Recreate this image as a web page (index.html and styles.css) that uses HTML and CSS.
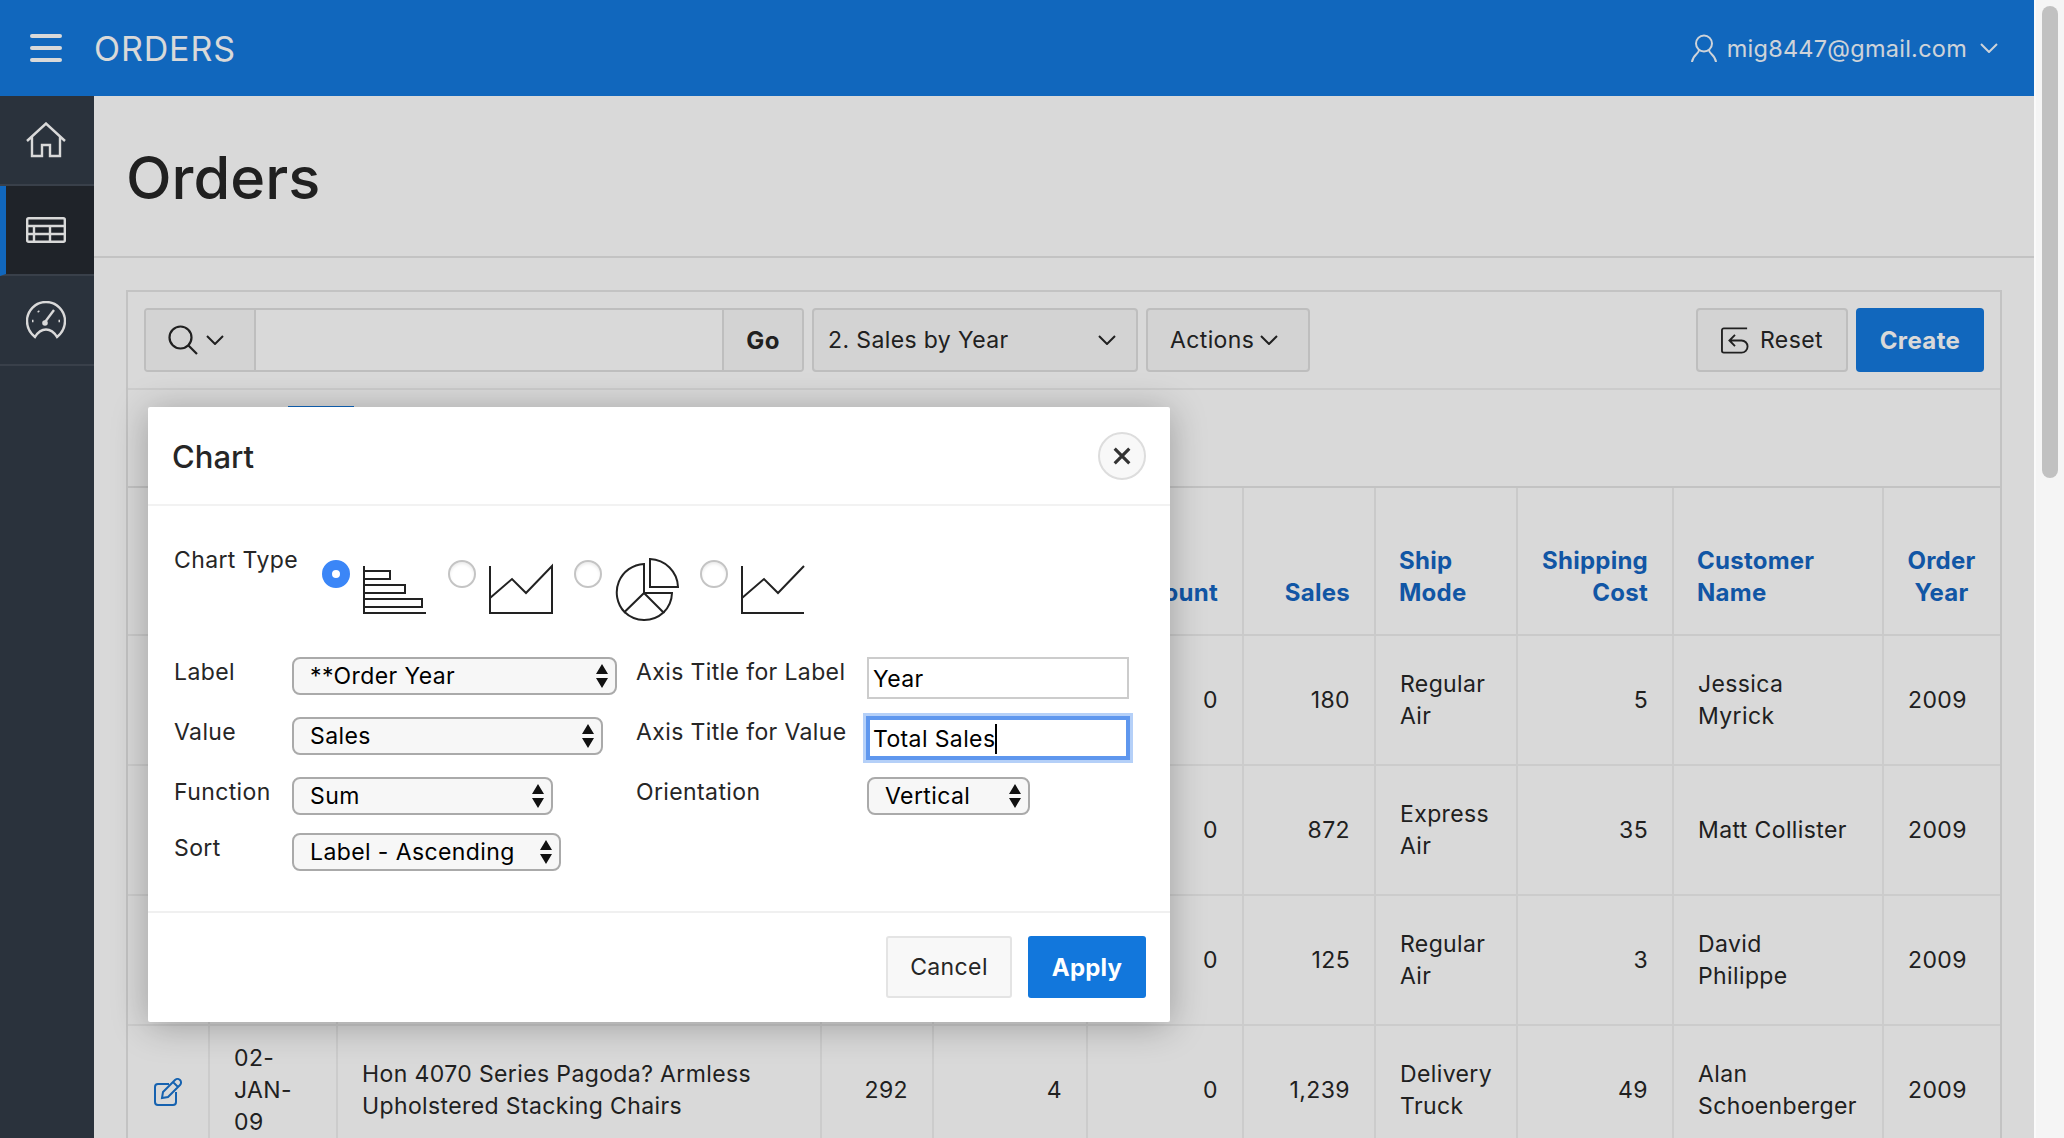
FILE: index.html
```html
<!DOCTYPE html>
<html lang="en">
<head>
    <meta charset="UTF-8">
    <title>Orders</title>
    <link rel="stylesheet" href="styles.css">
</head>
<body>
    <div class="page">
        <header class="topBar">
            <div class="menuIcon"><span></span><span></span><span></span></div>
            <div class="appName">ORDERS</div>
            <div class="userMenu">
                <svg class="userIcon" viewBox="0 0 26 29" fill="none" stroke="currentColor" stroke-width="2">
                    <circle cx="13" cy="9.5" r="8"/>
                    <path d="M8 16 C8 20 2 20 1 28 M18 16 C18 20 24 20 25 28"/>
                </svg>
                <span>mig8447@gmail.com</span>
                <svg class="chevron" viewBox="0 0 18 10" fill="none" stroke="currentColor" stroke-width="2"><path d="M1 1 L9 9 L17 1"/></svg>
            </div>
        </header>

        <div class="main">
            <nav class="sideNav">
                <a class="navItem">
                    <svg viewBox="0 0 40 36" fill="none" stroke="currentColor" stroke-width="2.4">
                        <path d="M1 19 L20 1.5 L39 19 M6 15 V34 H16 V23 H24 V34 H34 V15"/>
                    </svg>
                </a>
                <a class="navItem navItemActive">
                    <svg viewBox="0 0 40 26" fill="none" stroke="currentColor" stroke-width="2.4">
                        <rect x="1.2" y="1.2" width="37.6" height="23.6" rx="1.5"/>
                        <path d="M1 9 H39 M1 17 H39 M8 9 V25 M24 9 V25"/>
                    </svg>
                </a>
                <a class="navItem">
                    <svg viewBox="0 0 40 38" fill="none" stroke="currentColor" stroke-width="2.4">
                        <path d="M9 36 C4 32 1 26 1 20 A19 19 0 0 1 39 20 C39 26 36 32 31 36 C28 31 24 28.5 20 28.5 C16 28.5 12 31 9 36 Z"/>
                        <path d="M19 21 L28 9"/>
                        <circle cx="19" cy="22" r="1.6" fill="currentColor"/>
                        <path d="M6 20 H7.5 M32.5 20 H34 M12 10 L13 11"/>
                    </svg>
                </a>
            </nav>

            <div class="content">
                <div class="titleBand">
                    <h1 class="pageTitle">Orders</h1>
                </div>

                <section class="report">
                    <div class="toolbar">
                        <div class="searchGroup">
                            <div class="searchIconBox">
                                <svg class="searchIcon" viewBox="0 0 30 30" fill="none" stroke="currentColor" stroke-width="2.2">
                                    <circle cx="12.5" cy="12.5" r="11"/>
                                    <path d="M20.5 20.5 L29 29"/>
                                </svg>
                                <svg class="chevron" viewBox="0 0 18 10" fill="none" stroke="currentColor" stroke-width="2"><path d="M1 1 L9 9 L17 1"/></svg>
                            </div>
                            <div class="searchInput"></div>
                            <div class="goBtn">Go</div>
                        </div>
                        <div class="toolBtn reportSelect">
                            <span>2. Sales by Year</span>
                            <svg class="chevron" viewBox="0 0 18 10" fill="none" stroke="currentColor" stroke-width="2"><path d="M1 1 L9 9 L17 1"/></svg>
                        </div>
                        <div class="toolBtn actionsBtn">
                            <span>Actions</span>
                            <svg class="chevron" viewBox="0 0 18 10" fill="none" stroke="currentColor" stroke-width="2"><path d="M1 1 L9 9 L17 1"/></svg>
                        </div>
                        <div class="toolSpacer"></div>
                        <div class="toolBtn resetBtn">
                            <svg class="resetIcon" viewBox="0 0 30 29" fill="none" stroke="currentColor" stroke-width="2">
                                <path d="M28 1.5 H3 A2 2 0 0 0 1 3.5 V25.5 A2 2 0 0 0 3 27.5 H22 A6.5 6.5 0 0 0 22 14.5 H9 M15 8.5 L9 14.5 L15 20.5"/>
                            </svg>
                            <span>Reset</span>
                        </div>
                        <div class="createBtn">Create</div>
                    </div>

                    <div class="tabsRow"><div class="activeTab"></div></div>

                    <table class="ordersTable">
                        <colgroup>
                            <col class="colEdit"><col class="colDate"><col class="colName"><col class="colProfit">
                            <col class="colQty"><col class="colDiscount"><col class="colSales"><col class="colShip">
                            <col class="colCost"><col class="colCustomer"><col class="colYear">
                        </colgroup>
                        <thead>
                            <tr>
                                <th></th><th></th><th></th><th></th><th></th>
                                <th class="right">Discount</th>
                                <th class="right">Sales</th>
                                <th>Ship Mode</th>
                                <th class="right">Shipping Cost</th>
                                <th>Customer Name</th>
                                <th class="center">Order Year</th>
                            </tr>
                        </thead>
                        <tbody>
                            <tr>
                                <td></td><td></td><td></td><td></td><td></td>
                                <td class="right">0</td><td class="right">180</td><td>Regular Air</td>
                                <td class="right">5</td><td>Jessica Myrick</td><td>2009</td>
                            </tr>
                            <tr>
                                <td></td><td></td><td></td><td></td><td></td>
                                <td class="right">0</td><td class="right">872</td><td>Express Air</td>
                                <td class="right">35</td><td>Matt Collister</td><td>2009</td>
                            </tr>
                            <tr>
                                <td></td><td></td><td></td><td></td><td></td>
                                <td class="right">0</td><td class="right">125</td><td>Regular Air</td>
                                <td class="right">3</td><td>David<br>Philippe</td><td>2009</td>
                            </tr>
                            <tr>
                                <td class="center">
                                    <svg class="editIcon" viewBox="0 0 28 28" fill="none" stroke="currentColor" stroke-width="2">
                                        <path d="M15 6 H4 A3 3 0 0 0 1 9 V24 A3 3 0 0 0 4 27 H19 A3 3 0 0 0 22 24 V14"/>
                                        <path d="M8 20 L9 14 L21 2 A3 3 0 0 1 26 7 L14 19 Z M19 4 L24 9"/>
                                    </svg>
                                </td>
                                <td>02-JAN-09</td>
                                <td>Hon 4070 Series Pagoda? Armless Upholstered Stacking Chairs</td>
                                <td class="right">292</td><td class="right">4</td>
                                <td class="right">0</td><td class="right">1,239</td><td>Delivery Truck</td>
                                <td class="right">49</td><td>Alan Schoenberger</td><td>2009</td>
                            </tr>
                        </tbody>
                    </table>
                </section>
            </div>
        </div>

        <div class="overlay"></div>

        <div class="dialog">
            <div class="dialogHead">
                <h2 class="dialogTitle">Chart</h2>
                <div class="closeBtn">
                    <svg viewBox="0 0 16 16" fill="none" stroke="currentColor" stroke-width="2.8"><path d="M1.5 1.5 L14.5 14.5 M14.5 1.5 L1.5 14.5"/></svg>
                </div>
            </div>

            <div class="dialogBody">
                <div class="chartTypeRow">
                    <div class="chartTypeLabel">Chart Type</div>
                    <div class="chartOption">
                        <span class="radio radioOn"></span>
                        <svg class="chartIcon" viewBox="0 0 64 64" fill="none" stroke="currentColor" stroke-width="2">
                            <path d="M1 8 V55 H63"/>
                            <path d="M1 13 H27 V21 H1 M1 27 H42 V35 H1 M1 41 H59 V49 H1"/>
                        </svg>
                    </div>
                    <div class="chartOption">
                        <span class="radio"></span>
                        <svg class="chartIcon" viewBox="0 0 64 64" fill="none" stroke="currentColor" stroke-width="2">
                            <path d="M1 8 V55 H63 V8 L37 35 L23 21 L1 40"/>
                        </svg>
                    </div>
                    <div class="chartOption">
                        <span class="radio"></span>
                        <svg class="chartIcon" viewBox="0 0 64 64" fill="none" stroke="currentColor" stroke-width="2">
                            <path d="M29 6 A28.5 28.5 0 0 0 9.5 54 L29 35 Z"/>
                            <path d="M9.5 54 A28.5 28.5 0 0 0 48.5 54.5 L29 35"/>
                            <path d="M29 35 H57 A28.5 28.5 0 0 1 48.5 54.5"/>
                            <path d="M35 1 A29 29 0 0 1 63 29 H35 Z"/>
                        </svg>
                    </div>
                    <div class="chartOption">
                        <span class="radio"></span>
                        <svg class="chartIcon" viewBox="0 0 64 64" fill="none" stroke="currentColor" stroke-width="2">
                            <path d="M1 8 V55 H63 M1 40 L23 21 L37 35 L63 8"/>
                        </svg>
                    </div>
                </div>

                <div class="formGrid">
                    <label class="fieldLabel">Label</label>
                    <div class="selectBox selectLabel"><span>**Order Year</span><svg class="updown" viewBox="0 0 12 24"><path d="M6 0 L12 10 H0 Z M6 24 L12 14 H0 Z"/></svg></div>
                    <label class="fieldLabel">Axis Title for Label</label>
                    <div class="textBox">Year</div>

                    <label class="fieldLabel">Value</label>
                    <div class="selectBox selectValue"><span>Sales</span><svg class="updown" viewBox="0 0 12 24"><path d="M6 0 L12 10 H0 Z M6 24 L12 14 H0 Z"/></svg></div>
                    <label class="fieldLabel">Axis Title for Value</label>
                    <div class="textBox textBoxFocus">Total Sales<span class="caret"></span></div>

                    <label class="fieldLabel">Function</label>
                    <div class="selectBox selectFunction"><span>Sum</span><svg class="updown" viewBox="0 0 12 24"><path d="M6 0 L12 10 H0 Z M6 24 L12 14 H0 Z"/></svg></div>
                    <label class="fieldLabel">Orientation</label>
                    <div class="selectBox selectOrient"><span>Vertical</span><svg class="updown" viewBox="0 0 12 24"><path d="M6 0 L12 10 H0 Z M6 24 L12 14 H0 Z"/></svg></div>

                    <label class="fieldLabel">Sort</label>
                    <div class="selectBox selectSort"><span>Label - Ascending</span><svg class="updown" viewBox="0 0 12 24"><path d="M6 0 L12 10 H0 Z M6 24 L12 14 H0 Z"/></svg></div>
                </div>
            </div>

            <div class="dialogFoot">
                <div class="cancelBtn">Cancel</div>
                <div class="applyBtn">Apply</div>
            </div>
        </div>
    </div>

    <div class="scrollTrack"><div class="scrollThumb"></div></div>
</body>
</html>
```

FILE: styles.css
```css
*{
    padding: 0;
    margin: 0;
    box-sizing: border-box;
}
html,body{
    height: 100%;
    overflow: hidden;
}
body{
    display: flex;
    font-family: Inter, "Liberation Sans", sans-serif;
    font-size: 23px;
    letter-spacing: .38px;
    color: #262626;
    background-color: #fff;
}
.page{
    position: relative;
    flex: 1;
    min-width: 0;
    height: 100%;
    overflow: hidden;
    display: flex;
    flex-direction: column;
}
.scrollTrack{
    width: 30px;
    background-color: #f5f5f5;
    border-left: 2px solid #fafafa;
    padding: 6px 6px 0 6px;
}
.scrollThumb{
    height: 472px;
    border-radius: 8px;
    background-color: #c1c1c1;
}

/* 顶部 */
.topBar{
    height: 96px;
    flex: none;
    display: flex;
    align-items: center;
    background-color: #1579de;
    color: #fff;
    padding: 0 36px 0 30px;
}
.menuIcon{
    width: 32px;
    display: flex;
    flex-direction: column;
    gap: 8px;
}
.menuIcon span{
    height: 4px;
    border-radius: 2px;
    background-color: #fff;
}
.appName{
    margin-left: 32px;
    font-size: 34px;
    letter-spacing: .9px;
}
.userMenu{
    margin-left: auto;
    display: flex;
    align-items: center;
    font-size: 23.5px;
    letter-spacing: .25px;
    color: #f2f8ff;
}
.userIcon{
    width: 26px;
    height: 29px;
    margin-right: 10px;
}
.chevron{
    width: 18px;
    height: 10px;
}
.userMenu .chevron{
    margin-left: 13px;
}

/* 左侧导航 */
.main{
    flex: 1;
    display: flex;
    min-height: 0;
}
.sideNav{
    width: 94px;
    flex: none;
    background-color: #323b47;
    color: #fff;
}
.navItem{
    display: flex;
    align-items: center;
    justify-content: center;
    height: 90px;
    padding-right: 2px;
    border-bottom: 2px solid #434c58;
}
.navItem svg{
    width: 40px;
}
.navItemActive{
    background-color: #252a31;
    border-left: 6px solid #1579de;
    padding-right: 8px;
}

/* 内容区 */
.content{
    flex: 1;
    min-width: 0;
}
.titleBand{
    height: 162px;
    padding: 2px 0 0 32px;
    border-bottom: 2px solid #e6e6e6;
    display: flex;
    align-items: center;
}
.pageTitle{
    font-size: 59.5px;
    font-weight: 500;
    letter-spacing: 0;
}
.report{
    margin: 32px 32px 0 32px;
    border: 2px solid #e6e6e6;
}
.toolbar{
    height: 98px;
    display: flex;
    align-items: center;
    gap: 8px;
    padding: 0 16px;
    border-bottom: 2px solid #f0f0f0;
}
.toolSpacer{
    flex: 1;
}
.searchGroup{
    width: 660px;
    height: 64px;
    display: flex;
    border: 2px solid #e0e0e0;
    border-radius: 4px;
    overflow: hidden;
}
.searchIconBox{
    width: 110px;
    display: flex;
    align-items: center;
    gap: 8px;
    padding-left: 22px;
    background-color: #f8f8f8;
    border-right: 2px solid #e0e0e0;
}
.searchIcon{
    width: 30px;
    height: 30px;
}
.searchInput{
    flex: 1;
}
.goBtn{
    width: 80px;
    display: flex;
    align-items: center;
    justify-content: center;
    font-size: 24px;
    font-weight: 700;
    letter-spacing: .3px;
    background-color: #f8f8f8;
    border-left: 2px solid #e0e0e0;
}
.toolBtn{
    height: 64px;
    display: flex;
    align-items: center;
    background-color: #f8f8f8;
    border: 2px solid #e0e0e0;
    border-radius: 4px;
    padding: 0 14px;
}
.reportSelect{
    width: 326px;
    justify-content: space-between;
    padding-right: 20px;
}
.actionsBtn{
    width: 164px;
    gap: 6px;
    padding-left: 22px;
}
.resetBtn{
    width: 152px;
    gap: 11px;
    padding-left: 23px;
}
.resetIcon{
    width: 28px;
    height: 27px;
}
.createBtn{
    width: 128px;
    height: 64px;
    display: flex;
    align-items: center;
    justify-content: center;
    color: #fff;
    font-size: 24px;
    font-weight: 700;
    letter-spacing: .4px;
    background-color: #1579de;
    border-radius: 4px;
}
.tabsRow{
    height: 98px;
    padding: 16px 0 0 160px;
    border-bottom: 2px solid #e6e6e6;
}
.activeTab{
    width: 66px;
    height: 60px;
    border-top: 4px solid #1579de;
}

/* 表格 */
.ordersTable{
    width: 100%;
    table-layout: fixed;
    border-collapse: separate;
    border-spacing: 0;
    line-height: 32px;
}
.colEdit{ width: 82px; }
.colDate{ width: 128px; }
.colName{ width: 484px; }
.colProfit{ width: 112px; }
.colQty{ width: 154px; }
.colDiscount{ width: 156px; }
.colSales{ width: 132px; }
.colShip{ width: 142px; }
.colCost{ width: 156px; }
.colCustomer{ width: 210px; }
.colYear{ width: 116px; }
.ordersTable th{
    height: 148px;
    padding: 0 24px 25px 23px;
    vertical-align: bottom;
    text-align: left;
    color: #1566c2;
    font-size: 24px;
    font-weight: 700;
    letter-spacing: .25px;
    border-right: 2px solid #eee;
    border-bottom: 2px solid #eee;
}
.ordersTable td{
    height: 130px;
    padding: 0 24px;
    border-right: 2px solid #f0f0f0;
    border-bottom: 2px solid #f0f0f0;
}
.ordersTable th:last-child,
.ordersTable td:last-child{
    border-right: 0;
}
.ordersTable .right{
    text-align: right;
}
.ordersTable .center{
    text-align: center;
}
.editIcon{
    width: 28px;
    height: 28px;
    color: #1a74cf;
    vertical-align: middle;
}

/* 对话框 */
.overlay{
    position: absolute;
    inset: 0;
    background-color: rgba(0,0,0,.15);
}
.dialog{
    position: absolute;
    left: 148px;
    top: 407px;
    width: 1022px;
    height: 615px;
    display: flex;
    flex-direction: column;
    background-color: #fff;
    border-radius: 2px;
    box-shadow: 0 4px 36px rgba(0,0,0,.28);
}
.dialogHead{
    height: 99px;
    flex: none;
    display: flex;
    align-items: center;
    justify-content: space-between;
    padding: 1px 24px 0 24px;
    border-bottom: 2px solid #f2f2f2;
}
.dialogTitle{
    font-size: 31px;
    font-weight: 500;
    letter-spacing: 0;
}
.closeBtn{
    width: 48px;
    height: 48px;
    border-radius: 50%;
    display: flex;
    align-items: center;
    justify-content: center;
    background-color: #f8f8f8;
    border: 2px solid #ddd;
}
.closeBtn svg{
    width: 18px;
    height: 18px;
    color: #333;
}
.dialogBody{
    flex: 1;
    padding: 39px 0 0 26px;
}
.chartTypeRow{
    display: flex;
    height: 77px;
}
.chartTypeLabel{
    width: 148px;
    padding-top: 1px;
    line-height: 28px;
}
.chartOption{
    width: 126px;
    padding-top: 13px;
    display: flex;
    gap: 13px;
    align-items: flex-start;
}
.radio{
    width: 28px;
    height: 28px;
    margin-top: 2px;
    flex: none;
    border-radius: 50%;
    border: 2px solid #c4c4c4;
    background-color: #fff;
    box-shadow: inset 0 2px 3px rgba(0,0,0,.08);
}
.radioOn{
    border: 10px solid #3b86f7;
    box-shadow: none;
}
.chartIcon{
    width: 64px;
    height: 64px;
    flex: none;
    color: #222;
}
.formGrid{
    margin-top: 35px;
    display: grid;
    grid-template-columns: 118px 344px 231px 1fr;
    grid-template-rows: 42px 42px 38px 38px;
    row-gap: 18px;
}
.fieldLabel{
    padding-top: 1px;
    line-height: 28px;
}
.selectBox{
    height: 38px;
    display: flex;
    align-items: center;
    justify-content: space-between;
    padding: 0 7px 0 16px;
    color: #000;
    letter-spacing: .4px;
    background-color: #f7f7f7;
    border: 2px solid #aaa;
    border-radius: 8px;
}
.selectLabel{ width: 325px; }
.selectValue{ width: 311px; }
.selectFunction{ width: 261px; }
.selectSort{ width: 269px; }
.selectOrient{ width: 163px; }
.updown{
    width: 12px;
    height: 24px;
    fill: #111;
}
.textBox{
    width: 262px;
    height: 42px;
    display: flex;
    align-items: center;
    padding: 2px 0 0 4px;
    color: #000;
    background-color: #fff;
    border: 2px solid #ccc;
}
.textBoxFocus{
    border: 3px solid #5f97ee;
    box-shadow: 0 0 0 1px #5f97ee, 0 0 0 4px #b5d0f8;
    padding-left: 3px;
}
.caret{
    width: 2px;
    height: 30px;
    background-color: #000;
}
.dialogFoot{
    height: 111px;
    flex: none;
    display: flex;
    justify-content: flex-end;
    align-items: flex-start;
    gap: 16px;
    padding: 23px 24px 0 0;
    border-top: 2px solid #f0f0f0;
}
.cancelBtn,
.applyBtn{
    height: 62px;
    display: flex;
    align-items: center;
    justify-content: center;
    border-radius: 3px;
}
.cancelBtn{
    width: 126px;
    background-color: #f8f8f8;
    border: 2px solid #e4e4e4;
}
.applyBtn{
    width: 118px;
    color: #fff;
    font-size: 24px;
    font-weight: 700;
    letter-spacing: .2px;
    background-color: #1277dc;
}
```
